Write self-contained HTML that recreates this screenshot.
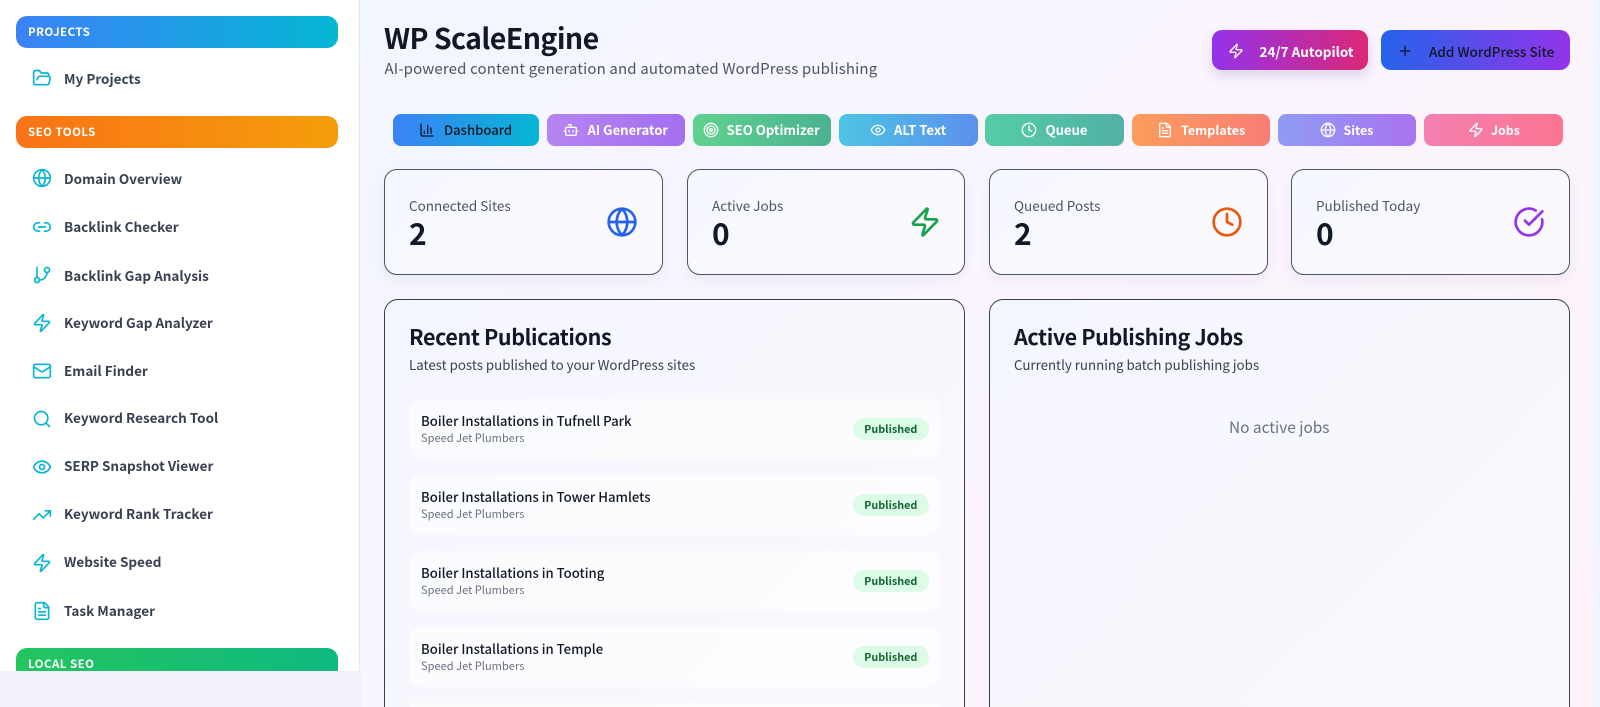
<!DOCTYPE html>
<html lang="en"><head><meta charset="utf-8"><title>WP ScaleEngine</title>
<style>
*{box-sizing:border-box;margin:0;padding:0}
html,body{width:1600px;height:707px;overflow:hidden;background:#eff6ff}
body{position:relative;font-family:"Noto Sans CJK SC","Liberation Sans",sans-serif;color:#111827}
.a{position:absolute;white-space:nowrap}
svg{position:absolute;fill:none;stroke:currentColor;stroke-width:2;stroke-linecap:round;stroke-linejoin:round}
#main{position:absolute;left:0;top:0;width:1594px;height:707px;overflow:hidden;background:linear-gradient(135deg,#eff6ff 0%,#faf5ff 55%,#fdf2f8 100%)}
#side{position:absolute;left:0;top:0;width:360px;height:671px;background:#fff;border-right:1px solid #e8e9f0;overflow:hidden}
#band{position:absolute;left:0;top:671px;width:361px;height:36px;background:#f3f0fb}
.pill{position:absolute;left:16px;width:321.5px;height:32px;border-radius:11px;color:#fff;font-weight:700;font-size:11.5px;letter-spacing:.45px;line-height:32px;padding-left:12px}
.it{position:absolute;left:64px;font-size:13.5px;font-weight:700;color:#374151;line-height:20px;white-space:nowrap}
#side svg{left:32px;width:20px;height:20px;color:#06b6d4}
.tab{position:absolute;top:113.5px;height:32px;border-radius:8px}
.tl{position:absolute;top:119px;line-height:22px;font-size:13.1px;font-weight:700;color:#fff;white-space:nowrap}
.tabi{top:122px;width:16px;height:16px;color:#fff}
.card{position:absolute;top:169px;width:278.5px;height:106px;border:1px solid #4b5563;border-radius:13px;background:linear-gradient(135deg,#f6f8ff,#fcf9fe);box-shadow:0 6px 14px rgba(60,60,100,.06)}
.lab{position:absolute;top:195px;font-size:13.5px;line-height:20px;color:#4b5563;white-space:nowrap}
.val{position:absolute;top:210px;font-size:30px;font-weight:700;line-height:44px;color:#111827}
.ci{top:206px;width:32px;height:32px}
.panel{position:absolute;top:299px;width:581px;height:460px;border:1px solid #374151;border-radius:14px;background:linear-gradient(135deg,#f4f6ff,#fbf8fe)}
.pt{position:absolute;top:319px;font-size:21.5px;font-weight:700;letter-spacing:-.4px;line-height:36px;color:#111827;white-space:nowrap}
.ps{position:absolute;top:355px;font-size:13.3px;line-height:20px;color:#374151;white-space:nowrap}
.row{position:absolute;left:409px;width:531px;height:60px;border-radius:12px;background:rgba(255,255,255,.6)}
.rt{position:absolute;left:421px;font-size:13.15px;font-weight:500;line-height:20px;color:#111827;white-space:nowrap}
.rs{position:absolute;left:421px;font-size:11.1px;line-height:16px;color:#6b7280;white-space:nowrap}
.bd{position:absolute;left:853px;width:75.5px;height:22px;border-radius:11px;background:#dcfce7;color:#166534;font-size:10.8px;font-weight:700;line-height:22px;text-align:center}
</style></head><body>
<div id="main"></div>

<div id="side">
<div class="pill" style="top:16px;background:linear-gradient(90deg,#3b82f6,#06b6d4)">PROJECTS</div>
<svg style="top:68px" viewBox="0 0 24 24"><path d="m6 14 1.5-2.9A2 2 0 0 1 9.24 10H20a2 2 0 0 1 1.94 2.5l-1.54 6a2 2 0 0 1-1.95 1.5H4a2 2 0 0 1-2-2V5a2 2 0 0 1 2-2h3.9a2 2 0 0 1 1.69.9l.81 1.2a2 2 0 0 0 1.67.9H18a2 2 0 0 1 2 2v2"/></svg>
<div class="it" style="top:68px">My Projects</div>

<div class="pill" style="top:116px;background:linear-gradient(90deg,#f97316,#f59e0b)">SEO TOOLS</div>
<svg style="top:168px" viewBox="0 0 24 24"><circle cx="12" cy="12" r="10"/><path d="M12 2a14.5 14.5 0 0 0 0 20 14.5 14.5 0 0 0 0-20"/><path d="M2 12h20"/></svg>
<div class="it" style="top:168px">Domain Overview</div>
<svg style="top:216.5px" viewBox="0 0 24 24"><path d="M9 17H7A5 5 0 0 1 7 7h2"/><path d="M15 7h2a5 5 0 1 1 0 10h-2"/><line x1="8" x2="16" y1="12" y2="12"/></svg>
<div class="it" style="top:216px">Backlink Checker</div>
<svg style="top:265px" viewBox="0 0 24 24"><line x1="6" x2="6" y1="3" y2="15"/><circle cx="18" cy="6" r="3"/><circle cx="6" cy="18" r="3"/><path d="M18 9a9 9 0 0 1-9 9"/></svg>
<div class="it" style="top:265px">Backlink Gap Analysis</div>
<svg style="top:312.5px" viewBox="0 0 24 24"><path d="M4 14a1 1 0 0 1-.78-1.63l9.9-10.2a.5.5 0 0 1 .86.46l-1.92 6.02A1 1 0 0 0 13 10h7a1 1 0 0 1 .78 1.63l-9.9 10.2a.5.5 0 0 1-.86-.46l1.92-6.02A1 1 0 0 0 11 14z"/></svg>
<div class="it" style="top:312px">Keyword Gap Analyzer</div>
<svg style="top:361px" viewBox="0 0 24 24"><rect width="20" height="16" x="2" y="4" rx="2"/><path d="m22 7-8.97 5.7a1.94 1.94 0 0 1-2.06 0L2 7"/></svg>
<div class="it" style="top:360px">Email Finder</div>
<svg style="top:408.5px" viewBox="0 0 24 24"><circle cx="11" cy="11" r="8"/><path d="m21 21-4.3-4.3"/></svg>
<div class="it" style="top:407px">Keyword Research Tool</div>
<svg style="top:457px" viewBox="0 0 24 24"><path d="M2.062 12.348a1 1 0 0 1 0-.696 10.75 10.75 0 0 1 19.876 0 1 1 0 0 1 0 .696 10.75 10.75 0 0 1-19.876 0"/><circle cx="12" cy="12" r="3"/></svg>
<div class="it" style="top:455px">SERP Snapshot Viewer</div>
<svg style="top:504.5px" viewBox="0 0 24 24"><polyline points="22 7 13.5 15.5 8.5 10.5 2 17"/><polyline points="16 7 22 7 22 13"/></svg>
<div class="it" style="top:503px">Keyword Rank Tracker</div>
<svg style="top:552.5px" viewBox="0 0 24 24"><path d="M4 14a1 1 0 0 1-.78-1.63l9.9-10.2a.5.5 0 0 1 .86.46l-1.92 6.02A1 1 0 0 0 13 10h7a1 1 0 0 1 .78 1.63l-9.9 10.2a.5.5 0 0 1-.86-.46l1.92-6.02A1 1 0 0 0 11 14z"/></svg>
<div class="it" style="top:551px">Website Speed</div>
<svg style="top:601px" viewBox="0 0 24 24"><path d="M15 2H6a2 2 0 0 0-2 2v16a2 2 0 0 0 2 2h12a2 2 0 0 0 2-2V7Z"/><path d="M14 2v4a2 2 0 0 0 2 2h4"/><path d="M10 9H8"/><path d="M16 13H8"/><path d="M16 17H8"/></svg>
<div class="it" style="top:600px">Task Manager</div>

<div class="pill" style="top:648px;background:linear-gradient(90deg,#22c55e,#10b981)">LOCAL SEO</div>
</div>
<div id="band"></div>

<div class="a" style="left:384px;top:16px;font-size:28.5px;font-weight:700;letter-spacing:-.58px;line-height:44px;color:#111827">WP ScaleEngine</div>
<div class="a" style="left:384.5px;top:57px;font-size:15px;line-height:24px;color:#4b5563;letter-spacing:.15px">AI-powered content generation and automated WordPress publishing</div>

<!-- top buttons -->
<div class="a" style="left:1211.5px;top:30px;width:156.5px;height:40px;border-radius:10px;background:linear-gradient(90deg,#9333ea,#db2777);box-shadow:0 6px 12px rgba(90,60,130,.18)"></div>
<svg class="a" style="left:1228px;top:43px;width:16px;height:16px;color:#fff" viewBox="0 0 24 24"><path d="M4 14a1 1 0 0 1-.78-1.63l9.9-10.2a.5.5 0 0 1 .86.46l-1.92 6.02A1 1 0 0 0 13 10h7a1 1 0 0 1 .78 1.63l-9.9 10.2a.5.5 0 0 1-.86-.46l1.92-6.02A1 1 0 0 0 11 14z"/></svg>
<div class="tl" style="left:1259.5px;top:40px;font-size:13.5px">24/7 Autopilot</div>
<div class="a" style="left:1381px;top:30px;width:189px;height:40px;border-radius:10px;background:linear-gradient(90deg,#2563eb,#9333ea)"></div>
<svg class="a" style="left:1397px;top:43px;width:16px;height:16px;color:#111827" viewBox="0 0 24 24"><path d="M5 12h14"/><path d="M12 5v14"/></svg>
<div class="tl" style="left:1429px;top:40px;color:#111827;font-weight:500;font-size:13.5px">Add WordPress Site</div>

<!-- tabs -->
<div class="tab" style="left:392.5px;width:146.5px;background:linear-gradient(90deg,#3b82f6,#06b6d4)"></div>
<svg class="tabi" style="left:419px;color:#111827" viewBox="0 0 24 24"><path d="M3 3v16a2 2 0 0 0 2 2h16"/><path d="M18 17V9"/><path d="M13 17V5"/><path d="M8 17v-3"/></svg>
<div class="tl" style="left:444px;color:#111827;font-weight:500">Dashboard</div>

<div class="tab" style="left:546.5px;width:138.5px;background:linear-gradient(90deg,#b685f1,#a36ff0)"></div>
<svg class="tabi" style="left:563px" viewBox="0 0 24 24"><path d="M12 8V4H8"/><rect width="16" height="12" x="4" y="8" rx="2"/><path d="M2 14h2"/><path d="M20 14h2"/><path d="M15 13v2"/><path d="M9 13v2"/></svg>
<div class="tl" style="left:587.5px">AI Generator</div>

<div class="tab" style="left:692.5px;width:138.5px;background:linear-gradient(90deg,#60d28f,#4bb28f)"></div>
<svg class="tabi" style="left:703px" viewBox="0 0 24 24"><circle cx="12" cy="12" r="10"/><circle cx="12" cy="12" r="6"/><circle cx="12" cy="12" r="2"/></svg>
<div class="tl" style="left:726.5px">SEO Optimizer</div>

<div class="tab" style="left:839px;width:138.5px;background:linear-gradient(90deg,#4cc5e4,#5c90ee)"></div>
<svg class="tabi" style="left:870px" viewBox="0 0 24 24"><path d="M2.062 12.348a1 1 0 0 1 0-.696 10.75 10.75 0 0 1 19.876 0 1 1 0 0 1 0 .696 10.75 10.75 0 0 1-19.876 0"/><circle cx="12" cy="12" r="3"/></svg>
<div class="tl" style="left:894px">ALT Text</div>

<div class="tab" style="left:985px;width:138.5px;background:linear-gradient(90deg,#55cda5,#52b1a6)"></div>
<svg class="tabi" style="left:1021px" viewBox="0 0 24 24"><circle cx="12" cy="12" r="10"/><polyline points="12 6 12 12 16 14"/></svg>
<div class="tl" style="left:1045.5px">Queue</div>

<div class="tab" style="left:1131.5px;width:138.5px;background:linear-gradient(90deg,#fb9d5c,#f87e75)"></div>
<svg class="tabi" style="left:1157px" viewBox="0 0 24 24"><path d="M15 2H6a2 2 0 0 0-2 2v16a2 2 0 0 0 2 2h12a2 2 0 0 0 2-2V7Z"/><path d="M14 2v4a2 2 0 0 0 2 2h4"/><path d="M10 9H8"/><path d="M16 13H8"/><path d="M16 17H8"/></svg>
<div class="tl" style="left:1181px;font-size:12.6px">Templates</div>

<div class="tab" style="left:1277.5px;width:138.5px;background:linear-gradient(90deg,#8f9bf5,#a974f0)"></div>
<svg class="tabi" style="left:1320px" viewBox="0 0 24 24"><circle cx="12" cy="12" r="10"/><path d="M12 2a14.5 14.5 0 0 0 0 20 14.5 14.5 0 0 0 0-20"/><path d="M2 12h20"/></svg>
<div class="tl" style="left:1343.5px;font-size:12.4px">Sites</div>

<div class="tab" style="left:1424px;width:138.5px;background:linear-gradient(90deg,#f480b1,#fb7590)"></div>
<svg class="tabi" style="left:1467.5px" viewBox="0 0 24 24"><path d="M4 14a1 1 0 0 1-.78-1.63l9.9-10.2a.5.5 0 0 1 .86.46l-1.92 6.02A1 1 0 0 0 13 10h7a1 1 0 0 1 .78 1.63l-9.9 10.2a.5.5 0 0 1-.86-.46l1.92-6.02A1 1 0 0 0 11 14z"/></svg>
<div class="tl" style="left:1491px;font-size:12.4px">Jobs</div>

<!-- stat cards -->
<div class="card" style="left:384px"></div>
<div class="lab" style="left:409px">Connected Sites</div><div class="val" style="left:409px">2</div>
<svg class="ci" style="left:606px;color:#2563eb" viewBox="0 0 24 24"><circle cx="12" cy="12" r="10"/><path d="M12 2a14.5 14.5 0 0 0 0 20 14.5 14.5 0 0 0 0-20"/><path d="M2 12h20"/></svg>

<div class="card" style="left:686.5px"></div>
<div class="lab" style="left:712px">Active Jobs</div><div class="val" style="left:712px">0</div>
<svg class="ci" style="left:908.5px;color:#16a34a" viewBox="0 0 24 24"><path d="M4 14a1 1 0 0 1-.78-1.63l9.9-10.2a.5.5 0 0 1 .86.46l-1.92 6.02A1 1 0 0 0 13 10h7a1 1 0 0 1 .78 1.63l-9.9 10.2a.5.5 0 0 1-.86-.46l1.92-6.02A1 1 0 0 0 11 14z"/></svg>

<div class="card" style="left:989px"></div>
<div class="lab" style="left:1014px">Queued Posts</div><div class="val" style="left:1014px">2</div>
<svg class="ci" style="left:1211px;color:#ea580c" viewBox="0 0 24 24"><circle cx="12" cy="12" r="10"/><polyline points="12 6 12 12 16 14"/></svg>

<div class="card" style="left:1291px"></div>
<div class="lab" style="left:1316px">Published Today</div><div class="val" style="left:1316px">0</div>
<svg class="ci" style="left:1513px;color:#9333ea" viewBox="0 0 24 24"><path d="M21.801 10A10 10 0 1 1 17 3.335"/><path d="m9 11 3 3L22 4"/></svg>

<!-- panels -->
<div class="panel" style="left:384px"></div>
<div class="pt" style="left:409px">Recent Publications</div>
<div class="ps" style="left:409px">Latest posts published to your WordPress sites</div>

<div class="row" style="top:398.5px"></div>
<div class="rt" style="top:411px">Boiler Installations in Tufnell Park</div>
<div class="rs" style="top:430px">Speed Jet Plumbers</div>
<div class="bd" style="top:418px">Published</div>

<div class="row" style="top:474.5px"></div>
<div class="rt" style="top:487px">Boiler Installations in Tower Hamlets</div>
<div class="rs" style="top:506px">Speed Jet Plumbers</div>
<div class="bd" style="top:494px">Published</div>

<div class="row" style="top:550.5px"></div>
<div class="rt" style="top:563px">Boiler Installations in Tooting</div>
<div class="rs" style="top:582px">Speed Jet Plumbers</div>
<div class="bd" style="top:570px">Published</div>

<div class="row" style="top:626.5px"></div>
<div class="rt" style="top:639px">Boiler Installations in Temple</div>
<div class="rs" style="top:658px">Speed Jet Plumbers</div>
<div class="bd" style="top:646px">Published</div>

<div class="row" style="top:702.5px;height:4.5px;border-radius:12px 12px 0 0"></div>

<div class="panel" style="left:989px;width:580.5px"></div>
<div class="pt" style="left:1014px">Active Publishing Jobs</div>
<div class="ps" style="left:1014px">Currently running batch publishing jobs</div>
<div class="a" style="left:989px;width:580.5px;top:415px;text-align:center;font-size:15.4px;line-height:24px;color:#6b7280">No active jobs</div>
</body></html>
